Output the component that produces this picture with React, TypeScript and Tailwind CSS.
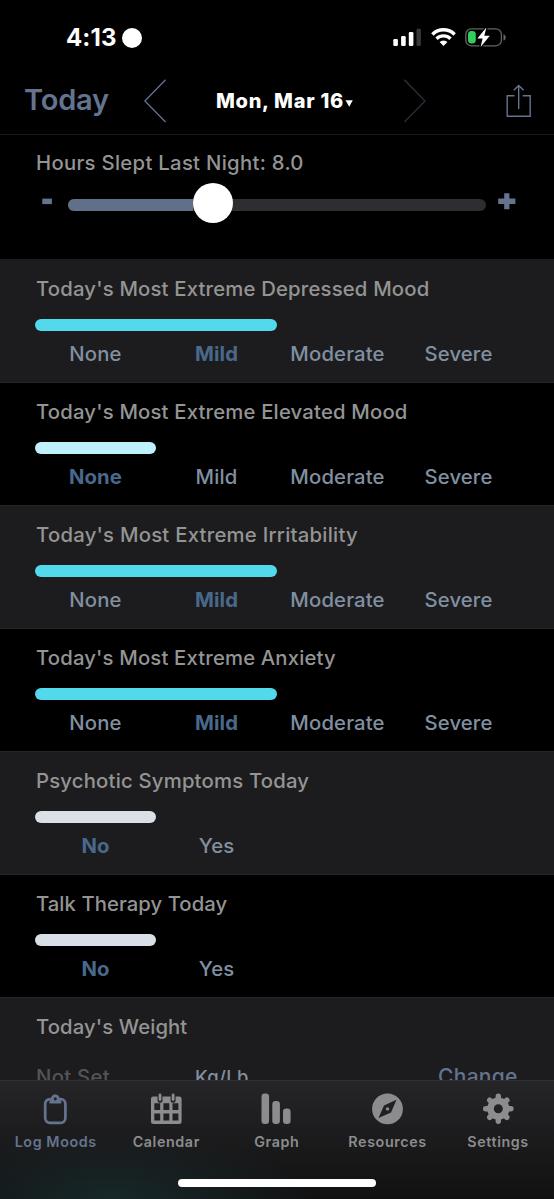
import React from "react";

type Question = {
  title: string;
  options: string[];
  selected: number;
  bar: string;
  spacing: string;
};

const questions: Question[] = [
  { title: "Today's Most Extreme Depressed Mood", options: ["None", "Mild", "Moderate", "Severe"], selected: 1, bar: "w-[242px] bg-[#52d9ec]", spacing: "tracking-[0.18px]" },
  { title: "Today's Most Extreme Elevated Mood", options: ["None", "Mild", "Moderate", "Severe"], selected: 0, bar: "w-[121px] bg-[#bff1fd]", spacing: "tracking-[0.18px]" },
  { title: "Today's Most Extreme Irritability", options: ["None", "Mild", "Moderate", "Severe"], selected: 1, bar: "w-[242px] bg-[#52d9ec]", spacing: "tracking-[0.25px]" },
  { title: "Today's Most Extreme Anxiety", options: ["None", "Mild", "Moderate", "Severe"], selected: 1, bar: "w-[242px] bg-[#52d9ec]", spacing: "tracking-[0.16px]" },
  { title: "Psychotic Symptoms Today", options: ["No", "Yes"], selected: 0, bar: "w-[121px] bg-[#dae0e6]", spacing: "tracking-[0.2px]" },
  { title: "Talk Therapy Today", options: ["No", "Yes"], selected: 0, bar: "w-[121px] bg-[#d8dfe7]", spacing: "tracking-[0.05px]" },
];

function StatusBar() {
  return (
    <div className="flex h-[70px] items-start pl-[66px] pt-[24px]">
      <span className="w-[56px] whitespace-nowrap text-[24px] font-bold leading-[28px] tracking-[0.1px] text-white">4:13</span>
      <span className="mt-[4px] size-[19.5px] rounded-full bg-white" />
      <div className="ml-[251.5px] mt-[4px] flex">
        <svg width="28" height="18" viewBox="0 0 28 18" fill="#fff">
          <rect x="0.3" y="11" width="4.6" height="7" rx="1.2" />
          <rect x="8.1" y="8" width="4.6" height="10" rx="1.2" />
          <rect x="15.8" y="4" width="4.6" height="14" rx="1.2" />
          <rect x="23.5" y="0.7" width="4.4" height="17.3" rx="1.2" fill="#373737" />
        </svg>
        <svg className="ml-[10px]" width="25" height="18" viewBox="0 0 25 18" fill="none" stroke="#fff">
          <path d="M1.4 6.4a15.8 15.8 0 0 1 22.2 0" strokeWidth="3.5" />
          <path d="M5.5 10.8a10 10 0 0 1 14 0" strokeWidth="3.3" />
          <path d="M8.6 14a5.7 5.7 0 0 1 7.8 0l-3.9 4z" fill="#fff" stroke="none" />
        </svg>
        <svg className="ml-[9px]" width="42" height="20" viewBox="0 0 42 20">
          <rect x="0.8" y="0.8" width="35.6" height="17" rx="5.6" fill="none" stroke="#646464" strokeWidth="1.3" />
          <path d="M38.5 6.2c3 .8 3 5.6 0 6.4z" fill="#646464" />
          <rect x="3" y="3" width="7.8" height="12.4" rx="3.4" fill="#32cd5a" />
          <path d="M21.5-.8 12.4 10.5h5.2L15.6 19 24.8 7.7h-5.5z" fill="#fff" stroke="#000" strokeWidth="2.6" paintOrder="stroke" strokeLinejoin="round" />
        </svg>
      </div>
    </div>
  );
}

function DateBar() {
  return (
    <div className="flex h-[65px] border-b border-[#1a1a1b]">
      <span className="ml-[24px] mt-[10px] w-[120px] whitespace-nowrap text-[29px] font-[570] leading-[40px] tracking-[-0.2px] text-[#64748f]">Today</span>
      <svg className="mt-[9px]" width="22" height="44" viewBox="0 0 22 44" fill="none" stroke="#64748f" strokeWidth="1.3">
        <path d="M21.6.8.9 22l20.7 21" />
      </svg>
      <div className="ml-[50px] mt-[16px] flex w-[188px] text-[20px] font-extrabold leading-[30px] tracking-[0.72px] text-white">
        <span className="whitespace-nowrap">Mon, Mar 16</span>
        <svg className="ml-[1px] mt-[14px]" width="8" height="7" viewBox="0 0 8 7" fill="#fff">
          <path d="M.5.2h7.3L4.2 6.8z" />
        </svg>
      </div>
      <svg className="mt-[9px]" width="22" height="44" viewBox="0 0 22 44" fill="none" stroke="#2c303a" strokeWidth="1.3">
        <path d="M.3.8 21 22 .3 43" />
      </svg>
      <svg className="ml-[80px] mt-[14px]" width="26" height="34" viewBox="0 0 26 34" fill="none" stroke="#64748f" strokeWidth="1.4">
        <path d="M8.5 11.7H1.2v20.6h23V11.7h-7.4M12.7 25V1.4M7.8 6.3l4.9-4.9 4.9 4.9" />
      </svg>
    </div>
  );
}

function SleepSlider() {
  return (
    <div className="h-[124px] pl-[36px] pt-[14px]">
      <div className="whitespace-nowrap text-[20.3px] font-[550] leading-[28px] tracking-[0.3px] text-[#949494]">Hours Slept Last Night: 8.0</div>
      <div className="mt-[6px] flex h-[40px] items-start">
        <svg className="mt-[8px]" width="32" height="20" viewBox="0 0 32 20" fill="#64748f">
          <rect x="6.3" y="7.6" width="9.6" height="5.5" />
        </svg>
        <div className="mt-[16px] flex h-[12px] w-[418px] items-center rounded-full bg-[#2d2d32]">
          <span className="h-[12px] w-[125px] rounded-l-full bg-[#607089]" />
          <span className="-mt-[4px] size-[40px] shrink-0 rounded-full bg-white" />
        </div>
        <svg className="ml-[12px] mt-[8px]" width="18" height="20" viewBox="0 0 18 20" fill="#64748f">
          <path d="M6.2 2.3H11.4V7.6H17.4V13H11.4V18.3H6.2V13H.2V7.6H6.2z" />
        </svg>
      </div>
    </div>
  );
}

function QuestionRow({ question, shaded }: { question: Question; shaded: boolean }) {
  return (
    <section className={`h-[123px] border-t border-[#262627] pl-[36px] pt-[15px] first-of-type:border-[#1c1c1e] ${shaded ? "bg-[#1c1c1e]" : "bg-black"}`}>
      <h2 className={`whitespace-nowrap text-[20.3px] font-[550] leading-[28px] text-[#949494] ${question.spacing}`}>{question.title}</h2>
      <div className={`-ml-px mt-[16px] h-[12px] rounded-full ${question.bar}`} />
      <div className="-ml-px mt-[9px] grid w-[484px] grid-cols-4 text-center text-[20.3px] leading-[28px]">
        {question.options.map((option, i) => (
          <span
            key={option}
            className={i === question.selected ? "font-bold tracking-[0.1px] text-[#49698b]" : "font-[550] tracking-[0.15px] text-[#8190a1]"}
          >
            {option}
          </span>
        ))}
      </div>
    </section>
  );
}

function ClipboardIcon() {
  return (
    <svg width="32" height="32" viewBox="0 0 32 32" fill="none" stroke="#64748f">
      <path d="M11.7 6.2h-.8a4.7 4.7 0 0 0-4.7 4.7v14.2a4.7 4.7 0 0 0 4.7 4.7h10.8a4.7 4.7 0 0 0 4.7-4.7V10.9a4.7 4.7 0 0 0-4.7-4.7h-.8" strokeWidth="2.7" />
      <path d="M12.3 4a4.3 4.3 0 0 1 8 0l2.2 5.2q0 1.3-1.2 1.3H11.3q-1.2 0-1.2-1.3zM16.3 4.2a1.6 1.6 0 1 0 0 3.2 1.6 1.6 0 0 0 0-3.2z" fill="#64748f" fillRule="evenodd" stroke="none" />
    </svg>
  );
}

function CalendarIcon() {
  return (
    <svg width="32" height="32" viewBox="0 0 32 32" fill="#8c8c8f">
      <path fillRule="evenodd" d="M3.3 3.5h4.2v3.7a2.5 2.5 0 0 0 5 0V3.5h8.1v3.7a2.5 2.5 0 0 0 5 0V3.5H29.3a2.3 2.3 0 0 1 2.3 2.3v22.9a2.3 2.3 0 0 1-2.3 2.3H3.3A2.3 2.3 0 0 1 1 28.7V5.8A2.3 2.3 0 0 1 3.3 3.5ZM4.3 10.2h5.9v6.9H4.3zM13.4 10.2h5.9v6.9h-5.9zM22.5 10.2h5.9v6.9h-5.9zM4.3 20.5h5.9v6.9H4.3zM13.4 20.5h5.9v6.9h-5.9zM22.5 20.5h5.9v6.9h-5.9z" />
      <rect x="8.6" y=".6" width="2.8" height="7.3" rx="1.4" />
      <rect x="21.7" y=".6" width="2.8" height="7.3" rx="1.4" />
    </svg>
  );
}

function GraphIcon() {
  return (
    <svg width="32" height="32" viewBox="0 0 32 32" fill="#8c8c8f">
      <rect x="1.5" y=".4" width="7.6" height="30.6" rx="3.3" />
      <rect x="12.3" y="8" width="7.6" height="23" rx="3.3" />
      <rect x="23" y="15.4" width="7.6" height="15.6" rx="3.3" />
    </svg>
  );
}

function CompassIcon() {
  return (
    <svg width="32" height="32" viewBox="0 0 32 32" fill="#8c8c8f">
      <path fillRule="evenodd" d="M16.5.5a15.4 15.4 0 1 0 0 30.8A15.4 15.4 0 0 0 16.5.5ZM25.5 6.8l-5.5 12.6L7.5 25l5.5-12.6z" />
      <circle cx="16.5" cy="15.9" r="1.7" />
    </svg>
  );
}

function GearIcon() {
  return (
    <svg width="32" height="32" viewBox="0 0 32 32" fill="none" stroke="#8c8c8f">
      <circle cx="16.3" cy="15.7" r="7.8" strokeWidth="6.6" />
      <path strokeWidth="5.4" strokeLinecap="round" d="M16.3 5.7V3.1M16.3 25.7v2.6M6.3 15.7H3.7M26.3 15.7h2.6M9.23 8.63l-1.5-1.5M23.37 22.77l1.5 1.5M9.23 22.77l-1.5 1.5M23.37 8.63l1.5-1.5" />
    </svg>
  );
}

const tabs = [
  { label: "Log Moods", icon: <ClipboardIcon /> },
  { label: "Calendar", icon: <CalendarIcon /> },
  { label: "Graph", icon: <GraphIcon /> },
  { label: "Resources", icon: <CompassIcon /> },
  { label: "Settings", icon: <GearIcon /> },
];

function TabBar() {
  return (
    <nav className="flex h-[119px] flex-col items-center border-t border-[#303032] bg-[radial-gradient(ellipse_200px_65px_at_112px_119px,rgba(25,47,49,0.75),transparent),linear-gradient(#252527,#111112)]">
      <div className="grid w-[554px] grid-cols-5 pr-px pt-[12px]">
        {tabs.map((tab, i) => (
          <div key={tab.label} className={`flex flex-col items-center ${i === 0 ? "text-[#64748f]" : "text-[#8c8c8f]"}`}>
            {tab.icon}
            <span className="mt-[7px] whitespace-nowrap pl-[0.8px] text-[14.3px] font-semibold leading-[20px] tracking-[0.6px]">{tab.label}</span>
          </div>
        ))}
      </div>
      <span className="mt-[27px] h-[8px] w-[198px] rounded-full bg-white" />
    </nav>
  );
}

export default function App() {
  return (
    <main className="flex h-[1199px] w-[554px] flex-col overflow-hidden bg-black font-['Inter',sans-serif]">
      <StatusBar />
      <DateBar />
      <SleepSlider />
      {questions.map((question, i) => (
        <QuestionRow key={question.title} question={question} shaded={i % 2 === 0} />
      ))}
      <section className="h-[83px] overflow-hidden border-t border-[#262627] bg-[#1c1c1e] pl-[36px] pt-[15px] text-[20.3px] font-[550] leading-[28px]">
        <h2 className="tracking-[0.1px] text-[#949494]">Today's Weight</h2>
        <div className="mt-[22px] flex tracking-[0.3px]">
          <span className="w-[159px] text-[#545456]">Not Set</span>
          <span className="w-[243px] text-[18.5px] text-[#8190a1]">Kg/Lb</span>
          <span className="text-[21px] tracking-[0.3px] text-[#64748f]">Change</span>
        </div>
      </section>
      <TabBar />
    </main>
  );
}
